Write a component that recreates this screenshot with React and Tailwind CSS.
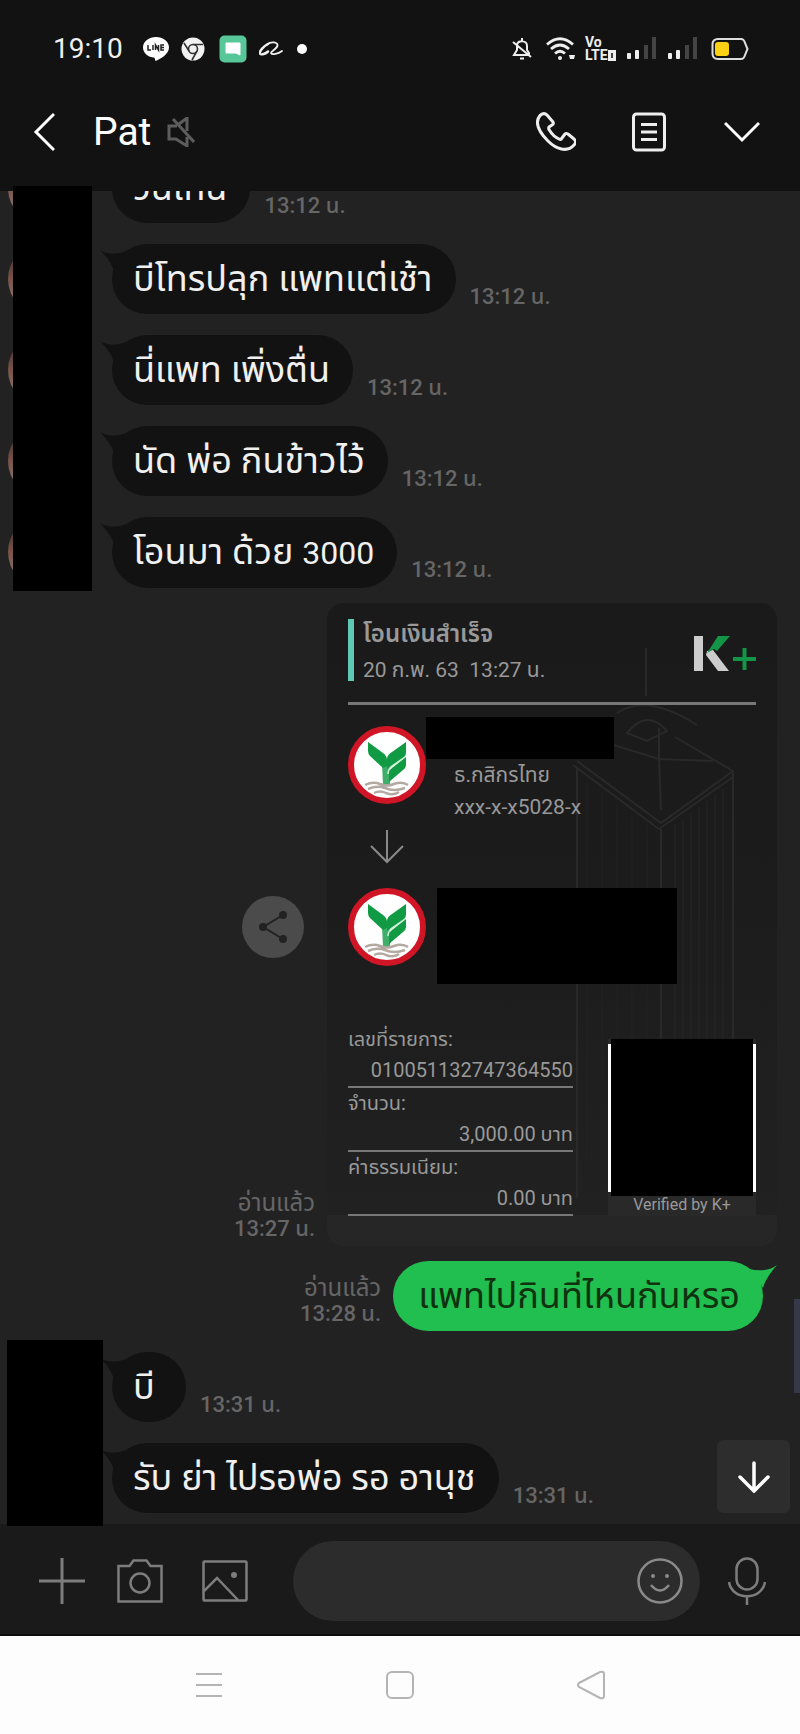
import React, { useState } from 'react';

const firstMessages = [
  { text: 'วันเทน', time: '13:12 น.' },
  { text: 'บีโทรปลุก แพทแต่เช้า', time: '13:12 น.' },
  { text: 'นี่แพท เพิ่งตื่น', time: '13:12 น.' },
  { text: 'นัด พ่อ กินข้าวไว้', time: '13:12 น.' },
  { text: 'โอนมา ด้วย ', amount: '3000', time: '13:12 น.' },
];

const lastMessages = [
  { text: 'บี', time: '13:31 น.' },
  { text: 'รับ ย่า ไปรอพ่อ รอ อานุช', time: '13:31 น.' },
];

const slipRows = [
  { label: 'เลขที่รายการ:', value: '010051132747364550' },
  { label: 'จำนวน:', value: '3,000.00 บาท' },
  { label: 'ค่าธรรมเนียม:', value: '0.00 บาท' },
];

function Signal() {
  return (
    <svg className="h-6 w-[30px]" viewBox="0 0 30 24">
      <rect x="0" y="16" width="4" height="6" rx="1" fill="#eee" />
      <rect x="8" y="13" width="4" height="9" rx="1" fill="#eee" />
      <rect x="17" y="8" width="4" height="14" fill="#444" />
      <rect x="25" y="0" width="4" height="22" fill="#444" />
    </svg>
  );
}

function StatusBar() {
  return (
    <div className="flex h-[98px] items-center justify-between pr-[51px] pl-[53px]">
      <div className="flex items-center">
        <span className="w-[90px] text-[28px] leading-8 text-[#f0f0f0]">19:10</span>
        <svg className="h-6 w-[26px]" viewBox="0 0 26 24">
          <path d="M13 0C6 0 0 4.500 0 10.500c0 5.500 5 9.500 11.500 10.300l1 3.200C17 22 26 17.500 26 10.500 26 4.500 20 0 13 0z" fill="#fff" />
          <path d="M5 8v5h3M10 8v5M12.500 13V8l3 5V8M21 8h-3v5h3M18 10.500h3" stroke="#222" strokeWidth="1.500" fill="none" />
        </svg>
        <svg className="ml-3 h-6 w-6" viewBox="0 0 24 24" fill="none">
          <circle cx="12" cy="12" r="11.500" fill="#f2f2f2" />
          <circle cx="12" cy="12" r="4.500" stroke="#333" strokeWidth="1.600" />
          <path d="M12 7.500h10M8 14L3 6M16 14l-5 9" stroke="#333" strokeWidth="1.600" />
        </svg>
        <svg className="ml-[14px] h-7 w-7" viewBox="0 0 28 28">
          <rect x="0.500" y="0.500" width="27" height="27" rx="5" fill="#57c79a" />
          <path d="M7 8h14v12l-4-2H7z" fill="#fff" stroke="#fff" strokeWidth="1" strokeLinejoin="round" />
        </svg>
        <svg className="ml-3 h-4 w-6" viewBox="0 0 24 16" fill="none" stroke="#f0f0f0" strokeLinecap="round">
          <path d="M9 3C5 5 0 10 1 12.500c1 2 6 0 8-2" strokeWidth="2.500" />
          <path d="M8 3.500C12 0 19 1 18.500 4.500 18 8 12 10 12 12c1 2 7 1 11-2" strokeWidth="1.800" />
        </svg>
        <span className="ml-[14px] h-[10px] w-[10px] rounded-full bg-white" />
      </div>
      <div className="flex items-center">
        <svg className="h-6 w-5" viewBox="0 0 20 24" fill="none" stroke="#eee" strokeWidth="2">
          <path d="M2 18h15v-2l-2-3V9c0-6-9-6-10-1v5zM10 1v3M8 21.500h4M1 5l18 15" />
        </svg>
        <svg className="ml-[14px] h-6 w-[30px]" viewBox="0 0 30 24" fill="none" stroke="#eee" strokeWidth="2.800">
          <path d="M1 7.500Q14 -4 27 7.500M5 12Q14 4 23 12M9 16.500Q14 12 19 16.500" />
          <circle cx="14" cy="21" r="2" fill="#eee" stroke="none" />
          <path d="M23 18h6l-1 4h-4z" fill="#eee" stroke="none" />
        </svg>
        <div className="ml-[9px] flex w-8 flex-col text-[14px] leading-[13px] font-bold text-[#eee]">
          <span>Vo</span>
          <span className="flex items-center">
            LTE
            <svg className="h-[11px] w-2 shrink-0" viewBox="0 0 8 11">
              <path d="M0 0h8v11H0z" fill="#eee" />
              <path d="M3 3h2v5H3z" fill="#444" />
            </svg>
          </span>
        </div>
        <div className="ml-[10px] flex gap-[11px]">
          <Signal />
          <Signal />
        </div>
        <svg className="ml-[13px] h-6 w-[38px]" viewBox="0 0 38 24" fill="none">
          <path d="M7 2h23q3 0 4 4l2.500 6-2.500 6q-1 4-4 4H7q-5.500 0-5.500-5.500v-9Q1.500 2 7 2z" stroke="#ddd" strokeWidth="2" />
          <rect x="4" y="5" width="14" height="14" rx="3" fill="#fcd013" />
        </svg>
      </div>
    </div>
  );
}

function ChatHeader() {
  return (
    <header className="flex h-[93px] items-center justify-between pr-10 pb-[26px] pl-[33px]">
      <div className="flex items-center">
        <button aria-label="Back">
          <svg className="h-[38px] w-[22px]" viewBox="0 0 22 38" fill="none" stroke="#fff" strokeWidth="3">
            <path d="M21 1L3 19l18 18" />
          </svg>
        </button>
        <h1 className="ml-[38px] text-[39px] leading-[44px] text-white">Pat</h1>
        <svg className="ml-4 h-[30px] w-[28px]" viewBox="0 0 28 30" fill="none" stroke="#5c5c5c" strokeWidth="3">
          <path d="M10 9H2v13h7l11 7v-9M12 7l8-6v13M6 2l21 23" />
        </svg>
      </div>
      <div className="flex items-center">
        <button aria-label="Call">
          <svg className="h-10 w-10" viewBox="0 0 40 40" fill="none" stroke="#eee" strokeWidth="3" strokeLinejoin="round">
            <path d="M4 3.500Q8 0 11 3l6 7q1 2-1 3l-3 2q-1 2 1 4 3 5 9 8 2 1 3-1l3-4q1-1 3 0l6 5q3 3 0 6c-7 8-18 4-26-4S-2 11 4 3.500z" />
          </svg>
        </button>
        <button aria-label="Notes" className="ml-14">
          <svg className="h-10 w-[34px]" viewBox="0 0 34 40" fill="none" stroke="#eee" strokeWidth="3">
            <rect x="1.500" y="2" width="31" height="36" rx="3" />
            <path d="M9 12.500h16M9 20h16M9 27.500h16" />
          </svg>
        </button>
        <button aria-label="More" className="ml-[58px]">
          <svg className="h-[22px] w-9" viewBox="0 0 36 22" fill="none" stroke="#fff" strokeWidth="3">
            <path d="M1 2l17 17L35 2" />
          </svg>
        </button>
      </div>
    </header>
  );
}

function Message({ text, amount, time }) {
  return (
    <li className="flex h-[70px] items-center pl-2">
      <span className="h-[74px] w-[74px] shrink-0 rounded-full bg-linear-to-b from-[#2c2828] via-[#7a5248] to-[#8f8985]" />
      <div className="relative ml-[30px] min-w-[74px] rounded-full bg-[#121212] py-[13px] pr-[23px] pl-[21px] text-[36px] leading-[44px] whitespace-pre text-[#f0f0f0]">
        <svg className="absolute top-[6px] -left-3 h-6 w-9" viewBox="0 0 36 24" fill="#121212">
          <path d="M0 0q12 7 26 1L14 22Q12 12 0 0z" />
        </svg>
        {text}
        {amount && <span className="text-[32px]">{amount}</span>}
      </div>
      <time className="ml-[14px] self-end pb-1 text-[22px] leading-[26px] font-medium whitespace-nowrap text-[#666]">{time}</time>
    </li>
  );
}

function ReadMark({ time }) {
  return (
    <div className="text-right text-[22px] leading-[26px] font-medium whitespace-nowrap text-[#666]">
      <p className="text-[24px] font-normal">อ่านแล้ว</p>
      <time>{time}</time>
    </div>
  );
}

function BankLogo() {
  return (
    <svg className="h-[78px] w-[78px] shrink-0" viewBox="0 0 78 78">
      <circle cx="39" cy="39" r="36" fill="#fff" stroke="#cf1526" strokeWidth="6" />
      <path d="M34 38l4-4 4 6v19h-7z" fill="#3fae68" />
      <path d="M20 16l15 11q4 3 4 7v6l-4 2-13-12q-2-2-2-5z" fill="#119a44" />
      <path d="M58 16v11q0 3-3 5L39 43V33q0-4 5-7z" fill="#119a44" />
      <path d="M58 31v8q0 3-3 5L41 56V47q0-3 3-5z" fill="#119a44" />
      <path d="M57 31L44 40q-4 3-4 8" fill="none" stroke="#c4ecd0" strokeWidth="1.500" />
      <path d="M17 59q8-4 15-1 7 3 14 0 8-3 14 1M20 63q9-4 17-1 9 4 20 0M26 67q6-3 12 0 7 3 13-1" fill="none" stroke="#b3a9a1" strokeWidth="2.500" />
    </svg>
  );
}

function Building() {
  return (
    <svg className="absolute top-[40px] right-[40px] h-[560px] w-[170px]" viewBox="0 0 170 560" fill="none" stroke="#292929" strokeWidth="2">
      <path d="M79 5v48M50 70q30-20 80 12M60 90q20-25 40-2l-20 10zM40 100l52 16 54 2M92 85v32l2 50M10 118l84 62 72-52-58-34" />
      <path d="M6 122l86 64 74-52M94 186v370M10 125v430M166 130v425" />
      <path d="M108 182v370M116 176v376M124 170v382M132 164v388M140 158v394M148 152v400M156 146v406" strokeWidth="1" stroke="#262626" />
      <path d="M20 140v415M35 150v405M50 162v393M65 172v383M80 182v373" strokeWidth="1" stroke="#222" />
    </svg>
  );
}

function Slip() {
  return (
    <article className="relative h-[643px] w-[450px] overflow-hidden rounded-2xl bg-[#262626]">
      <div className="absolute inset-x-0 top-0 h-[612px] bg-linear-to-b from-[#1a1a1a] via-[#1c1c1c] to-[#212121]" />
      <Building />
      <div className="relative px-[21px] pt-4 text-[#999]">
        <div className="flex h-[86px] justify-between border-b-3 border-[#777]">
          <div className="h-[62px] border-l-6 border-[#5fc9b5] pl-[9px]">
            <h2 className="text-[24px] leading-[30px] font-semibold">โอนเงินสำเร็จ</h2>
            <p className="pt-2 text-[21px] leading-[26px] whitespace-pre">20 ก.พ. 63  13:27 น.</p>
          </div>
          <svg className="mt-[17px] h-[35px] w-[62px]" viewBox="0 0 62 35">
            <path d="M0 0h9v35H0zM13 15l6-1 16 21H24L12 19z" fill="#ccc" />
            <path d="M13 17L24 0h12L23 15l-3-2z" fill="#149447" />
            <path d="M39 23h23M50.500 12v22" stroke="#149447" strokeWidth="4" />
          </svg>
        </div>
        <div className="mt-[21px] flex">
          <BankLogo />
          <div className="flex flex-col">
            <span className="-mt-[9px] h-[42px] w-[188px] bg-black" />
            <div className="flex flex-col pl-7 text-[21px] leading-8">
              <span>ธ.กสิกรไทย</span>
              <span>xxx-x-x5028-x</span>
            </div>
          </div>
        </div>
        <svg className="mt-[7px] ml-[22px] h-[34px] w-[34px]" viewBox="0 0 34 34" fill="none" stroke="#8a8a8a" strokeWidth="2">
          <path d="M17 0v32M1 16l16 16 16-16" />
        </svg>
        <div className="mt-6 flex gap-[11px]">
          <BankLogo />
          <span className="h-24 w-60 bg-black" />
        </div>
        <div className="mt-10 flex justify-between">
          <dl className="w-[225px]">
            {slipRows.map((row) => (
              <div key={row.label} className="h-16 border-b-2 border-[#777]">
                <dt className="text-[20px] leading-[30px]">{row.label}</dt>
                <dd className="text-right text-[20px] leading-8">{row.value}</dd>
              </div>
            ))}
          </dl>
          <div className="mt-[15px] w-[148px] bg-[#292929]">
            <div className="flex h-[157px] items-center">
              <span className="h-[148px] w-[3px] bg-white" />
              <span className="h-full flex-1 bg-black" />
              <span className="h-[148px] w-[3px] bg-white" />
            </div>
            <p className="h-[18px] text-center text-[16px] leading-[18px]">Verified by K+</p>
          </div>
        </div>
      </div>
    </article>
  );
}

function InputBar() {
  const [draft, setDraft] = useState('');

  return (
    <form className="flex h-28 items-center border-b-2 border-[#0c0c0c] bg-[#1a1a1a] pt-[3px] pr-[34px] pl-[39px]" onSubmit={(e) => e.preventDefault()}>
      <button type="button" aria-label="Add">
        <svg className="h-[46px] w-[46px]" viewBox="0 0 46 46" stroke="#7d7d7d" strokeWidth="3">
          <path d="M0 23h46M23 0v46" />
        </svg>
      </button>
      <button type="button" aria-label="Camera" className="ml-[32px]">
        <svg className="h-11 w-[46px]" viewBox="0 0 46 44" fill="none" stroke="#7d7d7d" strokeWidth="2.500">
          <path d="M1.500 7h11l4-5.500h13l4 5.500h11v35.500h-43z" />
          <circle cx="23" cy="24" r="9.500" />
        </svg>
      </button>
      <button type="button" aria-label="Gallery" className="ml-[39px]">
        <svg className="h-[42px] w-[46px]" viewBox="0 0 46 42" fill="none" stroke="#7d7d7d" strokeWidth="2.500">
          <rect x="1.500" y="1.500" width="43" height="39" rx="1" />
          <path d="M2 31l13-13 21 22" />
          <circle cx="32" cy="15" r="3" fill="#7d7d7d" stroke="none" />
        </svg>
      </button>
      <div className="ml-[45px] flex h-20 min-w-0 flex-1 items-center rounded-full bg-[#2c2c2c] pr-[17px] pl-8">
        <input
          type="text"
          aria-label="Message"
          className="min-w-0 flex-1 bg-transparent text-[32px] text-white outline-none"
          value={draft}
          onChange={(e) => setDraft(e.target.value)}
        />
        <button type="button" aria-label="Stickers">
          <svg className="h-[46px] w-[46px]" viewBox="0 0 46 46" fill="none" stroke="#8a8a8a" strokeWidth="2.500">
            <circle cx="23" cy="23" r="21.500" />
            <path d="M14 27q9 11 18 0" />
            <circle cx="16" cy="18" r="2" fill="#8a8a8a" stroke="none" />
            <circle cx="30" cy="18" r="2" fill="#8a8a8a" stroke="none" />
          </svg>
        </button>
      </div>
      <button type="button" aria-label="Record" className="ml-7">
        <svg className="h-12 w-[38px]" viewBox="0 0 38 48" fill="none" stroke="#7d7d7d" strokeWidth="2.500">
          <rect x="8.500" y="1.500" width="21" height="31" rx="10.500" />
          <path d="M1 25c3 19 33 19 36 0M19 39v9" />
        </svg>
      </button>
    </form>
  );
}

function NavBar() {
  return (
    <nav className="flex h-[98px] items-center justify-center gap-[163px] bg-[#fdfdfd]">
      <button aria-label="Recent apps">
        <svg className="h-7 w-7" viewBox="0 0 28 28" stroke="#b4b4b4" strokeWidth="2">
          <path d="M1 3h26M1 14h26M1 25h26" />
        </svg>
      </button>
      <button aria-label="Home">
        <svg className="h-7 w-7" viewBox="0 0 28 28" fill="none" stroke="#b4b4b4" strokeWidth="2">
          <rect x="1" y="1" width="26" height="26" rx="5" />
        </svg>
      </button>
      <button aria-label="Back to previous screen">
        <svg className="h-[30px] w-7" viewBox="0 0 28 30" fill="none" stroke="#b4b4b4" strokeWidth="2">
          <path d="M2 13L23 2q4-1 4 2v22q0 3-4 2L2 17q-2-2 0-4z" />
        </svg>
      </button>
    </nav>
  );
}

function App() {
  return (
    <div className="bg-[#121212] font-['Roboto','Noto_Sans_Thai',sans-serif]">
      <StatusBar />
      <ChatHeader />
      <main className="relative bg-[#222]">
        <div className="overflow-hidden pb-[11px]">
          <ul className="-mt-[38px] flex flex-col gap-[21px]">
            {firstMessages.map((message) => <Message key={message.text} {...message} />)}
          </ul>

          <div className="mt-4 flex items-end justify-end pr-[23px]">
            <div className="mr-3 flex flex-col items-end pb-1">
              <button aria-label="Share" className="mr-[11px] mb-[232px] flex h-[62px] w-[62px] items-center justify-center rounded-full bg-[#4b4b4b]">
                <svg className="h-8 w-7" viewBox="0 0 28 32" fill="#222" stroke="#222" strokeWidth="2">
                  <path d="M24 4L4 16l20 12" fill="none" />
                  <circle cx="24" cy="4" r="3" />
                  <circle cx="4" cy="16" r="3" />
                  <circle cx="24" cy="28" r="3" />
                </svg>
              </button>
              <ReadMark time="13:27 น." />
            </div>
            <Slip />
          </div>

          <div className="mt-[15px] mb-[21px] flex items-end justify-end gap-3 pr-[37px]">
            <div className="pb-1">
              <ReadMark time="13:28 น." />
            </div>
            <div className="relative rounded-full bg-[#20bf50] py-[13px] pr-[23px] pl-[25px] text-[36px] leading-[44px] whitespace-nowrap text-[#11320f]">
              <svg className="absolute top-1 -right-[14px] h-6 w-9" viewBox="0 0 36 24" fill="#20bf50">
                <path d="M36 0Q26 8 8 4l14 19q2-9 14-23z" />
              </svg>
              แพทไปกินที่ไหนกันหรอ
            </div>
          </div>

          <ul className="flex flex-col gap-[21px]">
            {lastMessages.map((message) => <Message key={message.text} {...message} />)}
          </ul>
        </div>

        {/* blocks that hide the avatars */}
        <div className="absolute -top-[5px] left-[13px] h-[405px] w-[79px] bg-black" />
        <div className="absolute -bottom-[2px] left-[7px] h-[186px] w-24 bg-black" />

        <div className="absolute right-0 bottom-[131px] h-[94px] w-[6px] bg-[#383948]" />
        <button aria-label="Jump to latest" className="absolute right-[10px] bottom-[11px] flex h-[73px] w-[73px] items-center justify-center rounded-md bg-[#2d2d2d]">
          <svg className="h-8 w-8" viewBox="0 0 32 32" fill="none" stroke="#fff" strokeWidth="3.500" strokeLinecap="round">
            <path d="M16 2v27M2 16l14 14 14-14" />
          </svg>
        </button>
      </main>
      <InputBar />
      <NavBar />
    </div>
  );
}

export default App;
